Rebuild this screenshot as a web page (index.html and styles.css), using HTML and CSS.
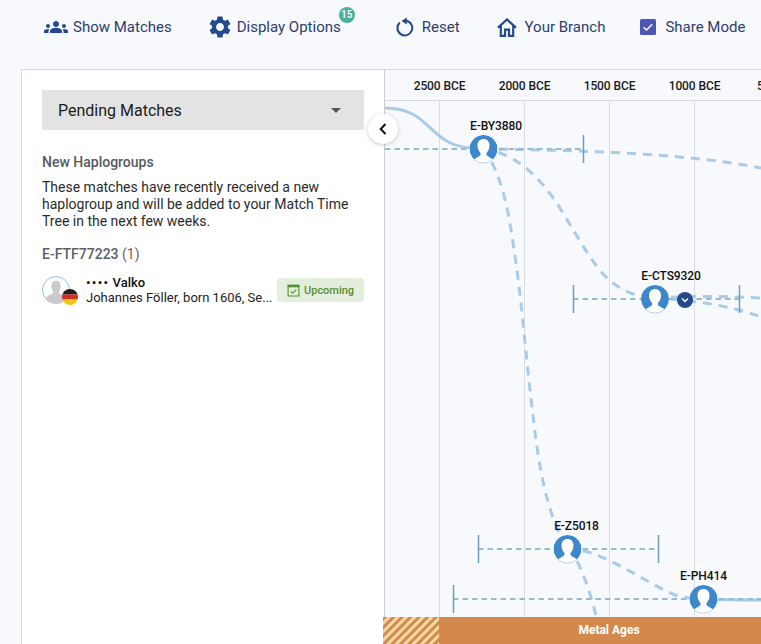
FILE: index.html
```html
<!DOCTYPE html>
<html lang="en">
<head>
<meta charset="utf-8">
<title>Match Time Tree</title>
<link rel="stylesheet" href="styles.css">
</head>
<body>
<header class="toolbar">
  <div class="tool tool-matches">
    <svg class="icon icon-groups" viewBox="0 0 24 24"><path d="M12 12.75c1.63 0 3.07.39 4.24.9 1.08.48 1.76 1.56 1.76 2.73V18H6v-1.61c0-1.18.68-2.26 1.76-2.73 1.17-.52 2.61-.91 4.24-.91zM4 13c1.1 0 2-.9 2-2s-.9-2-2-2-2 .9-2 2 .9 2 2 2zm1.13 1.1c-.37-.06-.74-.1-1.13-.1-.99 0-1.93.21-2.78.58C.48 14.9 0 15.62 0 16.43V18h4.5v-1.61c0-.83.23-1.61.63-2.29zM20 13c1.1 0 2-.9 2-2s-.9-2-2-2-2 .9-2 2 .9 2 2 2zm4 3.43c0-.81-.48-1.53-1.22-1.85-.85-.37-1.79-.58-2.78-.58-.39 0-.76.04-1.13.1.4.68.63 1.46.63 2.29V18H24v-1.57zM12 6c1.66 0 3 1.34 3 3s-1.34 3-3 3-3-1.34-3-3 1.34-3 3-3z"/></svg>
    <span>Show Matches</span>
  </div>
  <div class="tool tool-display">
    <svg class="icon icon-gear" viewBox="2.4 2 19.2 20"><path d="M19.14 12.94c.04-.3.06-.61.06-.94 0-.32-.02-.64-.07-.94l2.03-1.58c.18-.14.23-.41.12-.61l-1.92-3.32c-.12-.22-.37-.29-.59-.22l-2.39.96c-.5-.38-1.03-.7-1.62-.94l-.36-2.54c-.04-.24-.24-.41-.48-.41h-3.84c-.24 0-.43.17-.47.41l-.36 2.54c-.59.24-1.13.57-1.62.94l-2.39-.96c-.22-.08-.47 0-.59.22L2.74 8.87c-.12.21-.08.47.12.61l2.03 1.58c-.05.3-.09.63-.09.94s.02.64.07.94l-2.03 1.58c-.18.14-.23.41-.12.61l1.92 3.32c.12.22.37.29.59.22l2.39-.96c.5.38 1.03.7 1.62.94l.36 2.54c.05.24.24.41.48.41h3.84c.24 0 .44-.17.47-.41l.36-2.54c.59-.24 1.13-.56 1.62-.94l2.39.96c.22.08.47 0 .59-.22l1.92-3.32c.12-.22.07-.47-.12-.61l-2.01-1.58zM12 15.6c-1.98 0-3.6-1.62-3.6-3.6s1.62-3.6 3.6-3.6 3.6 1.62 3.6 3.6-1.62 3.6-3.6 3.6z"/></svg>
    <span>Display Options</span>
    <b class="count">15</b>
  </div>
  <div class="tool tool-reset">
    <svg class="icon icon-reset" viewBox="0 0 18 20"><path class="line" d="M10 3.7A7.4 7.4 0 1 1 3.8 5.6"/><path d="M10.8 0.4V7.6L5.6 4Z"/></svg>
    <span>Reset</span>
  </div>
  <div class="tool tool-branch">
    <svg class="icon icon-home" viewBox="0 0 20 19"><path class="line" d="M1 9.6L10 1.5L19 9.6M3.8 7.5V17.8H8V11.6H12V17.8H16.2V7.5"/></svg>
    <span>Your Branch</span>
  </div>
  <div class="tool tool-share">
    <svg class="icon icon-check" viewBox="0 0 16 16"><rect width="16" height="16" rx="1.5"/><path d="M3.6 8.2L6.6 11L12.2 5.2"/></svg>
    <span>Share Mode</span>
  </div>
</header>

<main class="panel">
  <aside class="sidebar">
    <div class="select">
      <span>Pending Matches</span>
      <i class="caret"></i>
    </div>
    <h2 class="heading">New Haplogroups</h2>
    <p class="intro">These matches have recently received a new haplogroup and will be added to your Match Time Tree in the next few weeks.</p>
    <h3 class="group">E-FTF77223 <span class="group-count">(1)</span></h3>
    <div class="match">
      <div class="avatar">
        <svg class="avatar-pic" viewBox="0 0 28 28">
          <circle class="avatar-bg" cx="14" cy="14" r="13.5"/>
          <path class="avatar-body" d="M3.5 23C5 19 9 18.5 11 17.5V15.5C9.5 13.5 9 11 9.5 8.5C10.2 5.5 12 4.5 14 4.5C16 4.5 17.8 5.5 18.5 8.5C19 11 18.5 13.5 17 15.5V17.5C19 18.5 23 19 24.5 23C22 26 18 27.5 14 27.5C10 27.5 6 26 3.5 23Z"/>
        </svg>
        <svg class="flag" viewBox="0 0 16 16">
          <clipPath id="flagclip"><circle cx="8" cy="8" r="8"/></clipPath>
          <g clip-path="url(#flagclip)"><rect class="de-k" width="16" height="5.5"/><rect class="de-r" y="5.5" width="16" height="5"/><rect class="de-y" y="10.5" width="16" height="5.5"/></g>
        </svg>
      </div>
      <div class="match-text">
        <div class="match-name"><span class="dots">••••</span> Valko</div>
        <div class="match-sub">Johannes Föller, born 1606, Se...</div>
      </div>
      <div class="badge">
        <svg class="badge-icon" viewBox="0 0 12 13"><path class="line" d="M1 2.5H11V12H1Z"/><path class="bar" d="M0.5 1.5H11.5V4H0.5Z"/><path class="line" d="M3.5 7.8L5.2 9.5L8.6 6.2"/></svg>
        <span>Upcoming</span>
      </div>
    </div>
    <button class="collapse" type="button" aria-label="Collapse">
      <svg viewBox="0 0 8 12"><path d="M6.5 1L1.7 6L6.5 11"/></svg>
    </button>
  </aside>

  <section class="chart">
    <div class="axis">
      <span class="year">2500 BCE</span>
      <span class="year">2000 BCE</span>
      <span class="year">1500 BCE</span>
      <span class="year">1000 BCE</span>
      <span class="year">500 BCE</span>
    </div>
    <svg class="tree" viewBox="385 101 376 543">
      <defs>
        <pattern id="hatch" width="6" height="6" patternUnits="userSpaceOnUse" patternTransform="rotate(45)">
          <rect width="6" height="6" fill="#f1d9a6"/>
          <rect width="3" height="6" fill="#d4894c"/>
        </pattern>
        <clipPath id="nodeclip"><circle r="14"/></clipPath>
        <g id="node">
          <circle class="node-ring" r="14"/>
          <g clip-path="url(#nodeclip)">
            <circle class="node-fill" r="14"/>
            <path class="node-person" d="M-9 15V10C-7 8.5 -4 7.5 -3 6V4C-5 2 -6 -1 -6 -3.5C-6 -7.5 -3.5 -10 0 -10C3.5 -10 6 -7.5 6 -3.5C6 -1 5 2 3 4V6C4 7.5 7 8.5 9 10V15Z"/>
          </g>
          <path class="node-edge" d="M-9.5 10.5A14 14 0 0 0 9.5 10.5"/>
        </g>
      </defs>
      <path class="grid" d="M439.5 101V644M524.5 101V644M609.5 101V644M694.5 101V644"/>

      <path class="curve" d="M385 108C432 108 428 146 472 148"/>
      <path class="curve dashed" d="M483 149C560 150 680 152 761 168"/>
      <path class="curve dashed" d="M483 149C510 152 535 170 558 205C580 240 595 270 613 283C625 292 640 298 655 298"/>
      <path class="curve dashed" d="M655 298C690 300 730 305 761 317"/>
      <path class="curve dashed" d="M655 298C690 296 725 296 761 298"/>
      <path class="curve dashed" d="M483 149C500 170 508 205 514 250C522 300 527 370 533 415C538 460 545 510 567 549"/>
      <path class="curve dashed" d="M567 549C578 555 590 590 597 620"/>
      <path class="curve dashed" d="M567 549C600 548 640 580 675 595C685 598 695 599 703 599"/>
      <path class="curve" d="M703 599C725 600 745 600 761 600"/>

      <path class="range" d="M385 149H583"/>
      <path class="tick" d="M583.5 135V163"/>
      <path class="range" d="M573 299H739"/>
      <path class="tick" d="M573.5 285V313M739.5 285V313"/>
      <path class="range" d="M478 549H659"/>
      <path class="tick" d="M478.5 535V563M658.5 535V563"/>
      <path class="range" d="M453 599H761"/>
      <path class="tick" d="M453.5 585V613"/>

      <use href="#node" x="483.5" y="149"/>
      <use href="#node" x="655" y="299"/>
      <use href="#node" x="567.5" y="549"/>
      <use href="#node" x="703.5" y="599"/>

      <circle class="expand" cx="685" cy="300" r="8"/>
      <path class="expand-chevron" d="M682 298.5L685 301.5L688 298.5"/>

      <text class="label" x="496" y="130">E-BY3880</text>
      <text class="label" x="671" y="280">E-CTS9320</text>
      <text class="label" x="576.5" y="530">E-Z5018</text>
      <text class="label" x="703.5" y="580">E-PH414</text>
    </svg>
    <div class="band">
      <div class="band-hatch">
        <svg class="hatch-svg" width="56" height="27"><rect width="56" height="27" fill="url(#hatch)"/></svg>
      </div>
      <div class="band-solid">Metal Ages</div>
    </div>
  </section>
</main>
</body>
</html>
```
FILE: styles.css
```css
html, body {
  margin: 0;
  height: 644px;
  overflow: hidden;
  background: #f7f9fd;
  font-family: Roboto, "Liberation Sans", sans-serif;
}
.toolbar {
  display: flex;
  align-items: center;
  height: 54px;
  padding-left: 44px;
  margin-bottom: 15px;
  color: #2d4069;
  font-size: 15px;
}
.tool {
  display: flex;
  align-items: center;
  position: relative;
  white-space: nowrap;
}
.tool-display { margin-left: 37px; }
.tool-reset { margin-left: 55px; }
.tool-branch { margin-left: 37px; }
.tool-share { margin-left: 35px; }
.icon { display: block; fill: #25498f; }
.icon .line { fill: none; stroke: #25498f; stroke-width: 2; }
.icon-home .line { stroke-width: 2.2; }
.icon-groups { width: 24px; height: 24px; margin-right: 5px; }
.icon-gear { width: 22px; height: 22px; margin-right: 6px; }
.icon-reset { width: 18px; height: 20px; margin-right: 8px; }
.icon-home { width: 20px; height: 19px; margin-right: 8px; }
.icon-check { width: 16px; height: 16px; margin-right: 9px; }
.icon-check rect { fill: #4b55b2; }
.icon-check path { fill: none; stroke: #fff; stroke-width: 1.5; }
.count {
  position: absolute;
  right: -14px;
  top: -9px;
  width: 16px;
  height: 16px;
  border-radius: 50%;
  background: #4cb0a0;
  color: #fff;
  font-size: 10px;
  font-weight: 500;
  line-height: 16px;
  text-align: center;
}

.panel {
  display: flex;
  height: 574px;
  margin-left: 21px;
  border-top: 1px solid #d6d8dc;
}
.sidebar {
  position: relative;
  z-index: 2;
  box-sizing: border-box;
  width: 364px;
  flex: none;
  padding: 20px 20px 0 20px;
  background: #fff;
  border-left: 1px solid #d6d8dc;
  border-right: 1px solid #ccced3;
}
.select {
  display: flex;
  align-items: center;
  justify-content: space-between;
  height: 40px;
  padding: 0 23px 0 16px;
  background: #e3e3e3;
  color: #1c1c1c;
  font-size: 16px;
}
.caret {
  width: 0;
  height: 0;
  border-left: 5px solid transparent;
  border-right: 5px solid transparent;
  border-top: 5px solid #555;
}
.heading {
  margin: 24px 0 0;
  color: #555a60;
  font-size: 14px;
  font-weight: 500;
  line-height: 17px;
}
.intro {
  margin: 8px 0 0;
  color: #2b2b2b;
  font-size: 14px;
  line-height: 17px;
}
.group {
  margin: 16px 0 0;
  color: #5a5f66;
  font-size: 14px;
  font-weight: 500;
  line-height: 17px;
}
.group-count { color: #7b5d57; font-weight: 400; }
.match {
  display: flex;
  align-items: center;
  margin-top: 12px;
}
.avatar {
  position: relative;
  width: 28px;
  height: 28px;
  flex: none;
  margin-right: 16px;
}
.avatar-pic { display: block; width: 28px; height: 28px; }
.avatar-bg { fill: #fff; stroke: #92c0e4; stroke-width: 1; }
.avatar-body { fill: #c9cacb; }
.flag {
  position: absolute;
  left: 20px;
  top: 13px;
  width: 16px;
  height: 16px;
}
.de-k { fill: #1d1d1d; }
.de-r { fill: #d32f1f; }
.de-y { fill: #f5c518; }
.match-text {
  flex: 1;
  min-width: 0;
  font-size: 13px;
  line-height: 15px;
  color: #222;
  white-space: nowrap;
}
.match-name { font-weight: 500; color: #111; }
.dots { letter-spacing: 1.3px; }
.badge {
  display: flex;
  align-items: center;
  gap: 4px;
  height: 24px;
  width: 87px;
  box-sizing: border-box;
  padding-left: 10px;
  flex: none;
  border-radius: 4px;
  background: #e3eedd;
  color: #54902f;
  font-size: 11px;
  font-weight: 500;
}
.badge-icon { width: 13px; height: 14px; flex: none; }
.badge-icon .line { fill: none; stroke: #54902f; stroke-width: 1; }
.badge-icon .bar { fill: #54902f; }
.collapse {
  position: absolute;
  right: -14px;
  top: 44px;
  width: 30px;
  height: 30px;
  padding: 0;
  display: flex;
  align-items: center;
  justify-content: center;
  border: 0;
  border-radius: 50%;
  background: #fff;
  box-shadow: 0 1px 4px rgba(0, 0, 0, 0.2);
}
.collapse svg { width: 8px; height: 12px; fill: none; stroke: #111; stroke-width: 2; }

.chart {
  position: relative;
  flex: 1;
  min-width: 0;
  display: flex;
  flex-direction: column;
}
.axis {
  display: flex;
  height: 30px;
  flex: none;
  padding-left: 12px;
  border-bottom: 1px solid #d6d8dc;
  white-space: nowrap;
  overflow: hidden;
}
.year {
  flex: none;
  width: 85px;
  text-align: center;
  font-size: 12px;
  font-weight: 500;
  letter-spacing: -0.1px;
  line-height: 33px;
  color: #1a1a1a;
}
.tree { display: block; width: 376px; height: 543px; flex: none; }
.grid { fill: none; stroke: #dadde2; stroke-width: 1; }
.curve { fill: none; stroke: #a9cbea; stroke-width: 3; }
.dashed { stroke-dasharray: 9 7; }
.range { fill: none; stroke: #97bbcf; stroke-width: 2; stroke-dasharray: 5.5 4; }
.tick { fill: none; stroke: #6f9fb8; stroke-width: 1.5; }
.node-ring { fill: #fff; }
.node-fill { fill: #3d87cb; }
.node-person { fill: #fff; }
.node-edge { fill: none; stroke: #bcd7ef; stroke-width: 1; }
.expand { fill: #234a8c; }
.expand-chevron { fill: none; stroke: #fff; stroke-width: 1.4; }
.label {
  font-size: 12px;
  font-weight: 500;
  letter-spacing: -0.1px;
  fill: #111;
  text-anchor: middle;
}
.band {
  position: absolute;
  z-index: 3;
  left: -2px;
  bottom: 0;
  width: 380px;
  height: 27px;
  display: flex;
}
.band-hatch { width: 56px; height: 27px; flex: none; }
.hatch-svg { display: block; }
.band-solid {
  width: 340px;
  flex: none;
  background: #d4894c;
  color: #fff;
  font-size: 12px;
  font-weight: 700;
  line-height: 27px;
  text-align: center;
}
```
